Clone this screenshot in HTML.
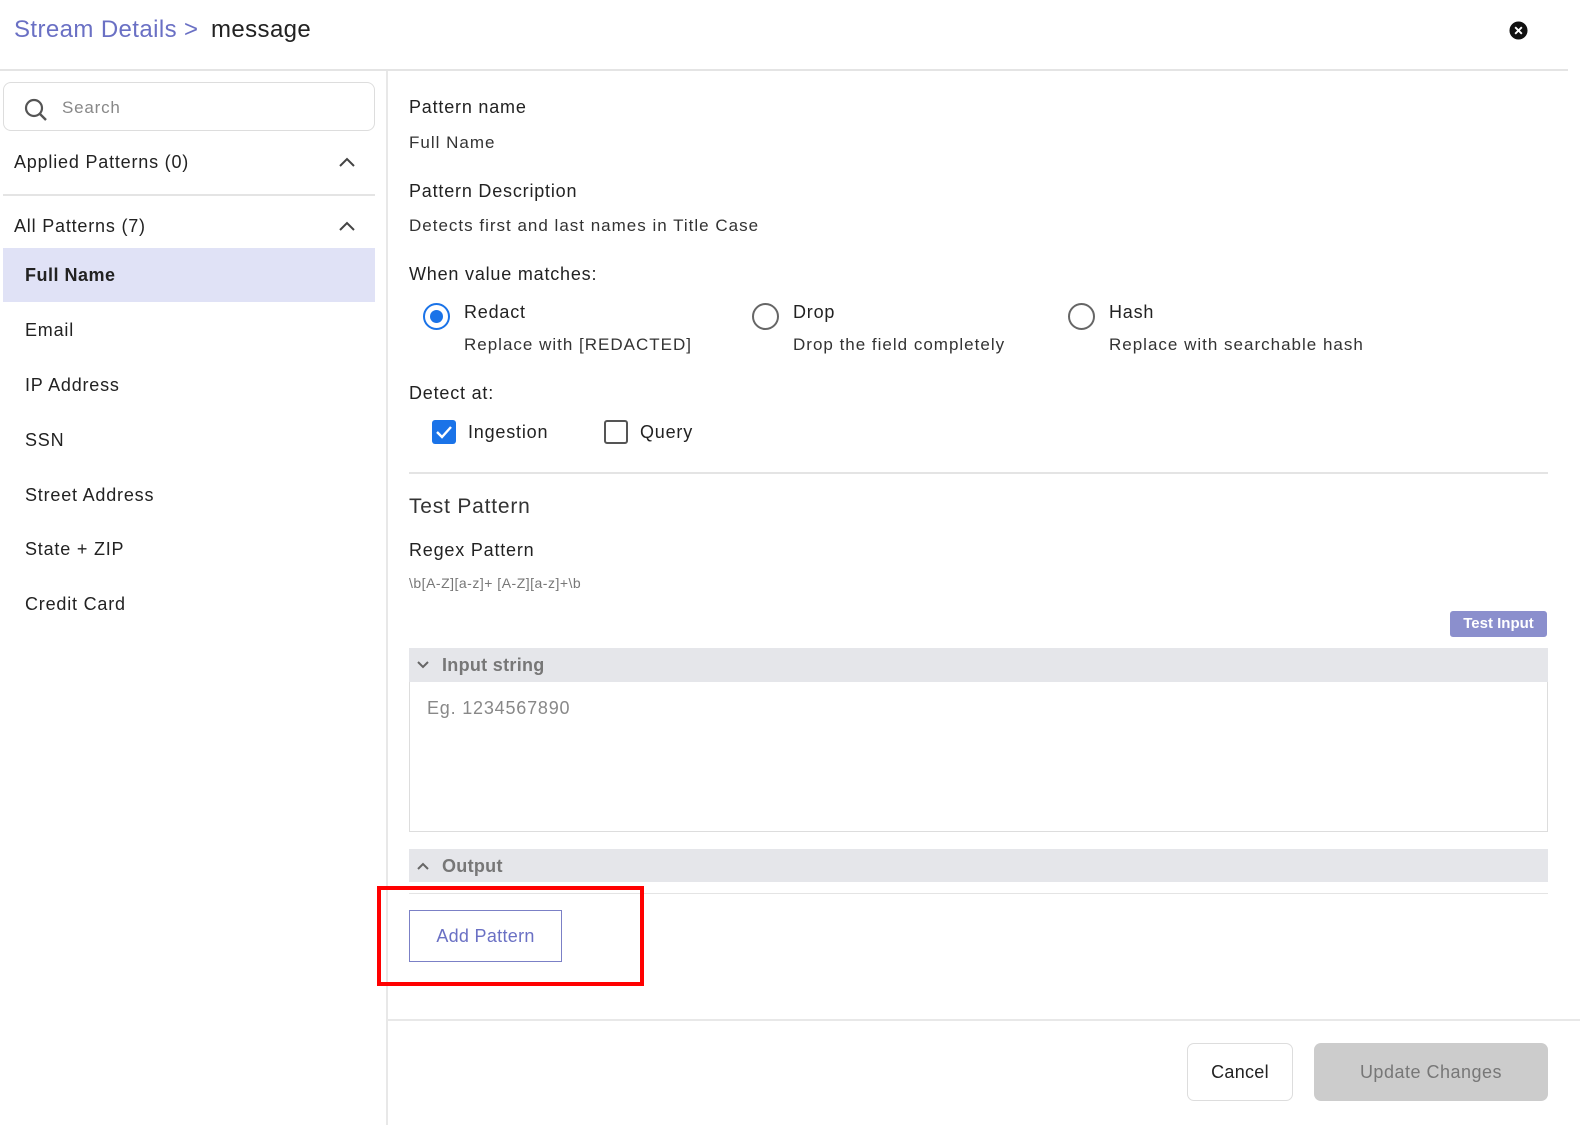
<!DOCTYPE html>
<html><head><meta charset="utf-8"><style>
*{box-sizing:border-box;margin:0;padding:0}
body{width:1580px;height:1125px;background:#fff;font-family:"Liberation Sans",sans-serif;color:#222;position:relative;overflow:hidden;letter-spacing:0.8px}
.a{position:absolute;white-space:nowrap}
.t{font-size:18px;line-height:22px}
.s{font-size:17px;line-height:22px;color:#333;letter-spacing:1px}
</style></head><body>
<div class="a" style="left:14px;top:15px;font-size:24px;line-height:30px;color:#6a70c4;letter-spacing:0.4px">Stream Details &gt;</div>
<div class="a" style="left:211px;top:15px;font-size:24px;line-height:30px;color:#222;letter-spacing:0.4px">message</div>
<svg class="a" style="left:1509px;top:21px" width="19" height="19" viewBox="0 0 20 20"><circle cx="10" cy="10" r="9.5" fill="#111"/><path d="M6.5 6.5l7 7M13.5 6.5l-7 7" stroke="#fff" stroke-width="2"/></svg>
<div class="a" style="left:0;top:69px;width:1568px;height:2px;background:#e4e4e4"></div>
<div class="a" style="left:386px;top:71px;width:2px;height:1054px;background:#e8e8e8"></div>

<div class="a" style="left:3px;top:82px;width:372px;height:49px;border:1px solid #ddd;border-radius:8px"></div>
<svg class="a" style="left:23px;top:97px" width="26" height="26" viewBox="0 0 26 26"><circle cx="11" cy="11" r="8" fill="none" stroke="#555" stroke-width="2.2"/><path d="M17 17l6 6" stroke="#555" stroke-width="2.4"/></svg>
<div class="a t" style="left:62px;top:97px;color:#888;font-size:17px">Search</div>
<div class="a t" style="left:14px;top:151px">Applied Patterns (0)</div>
<svg class="a" style="left:338px;top:155px" width="18" height="14"><path d="M2 11l7-7 7 7" fill="none" stroke="#444" stroke-width="2"/></svg>
<div class="a" style="left:3px;top:194px;width:372px;height:2px;background:#e4e4e4"></div>
<div class="a t" style="left:14px;top:215px">All Patterns (7)</div>
<svg class="a" style="left:338px;top:219px" width="18" height="14"><path d="M2 11l7-7 7 7" fill="none" stroke="#444" stroke-width="2"/></svg>
<div class="a" style="left:3px;top:248px;width:372px;height:54px;background:#e0e2f6"></div>
<div class="a t" style="left:25px;top:264px;font-weight:bold;letter-spacing:0.5px">Full Name</div>
<div class="a t" style="left:25px;top:319px">Email</div>
<div class="a t" style="left:25px;top:374px">IP Address</div>
<div class="a t" style="left:25px;top:429px">SSN</div>
<div class="a t" style="left:25px;top:484px">Street Address</div>
<div class="a t" style="left:25px;top:538px">State + ZIP</div>
<div class="a t" style="left:25px;top:593px">Credit Card</div>

<div class="a t" style="left:409px;top:96px">Pattern name</div>
<div class="a s" style="left:409px;top:132px">Full Name</div>
<div class="a t" style="left:409px;top:180px">Pattern Description</div>
<div class="a s" style="left:409px;top:215px">Detects first and last names in Title Case</div>
<div class="a t" style="left:409px;top:263px">When value matches:</div>

<div class="a" style="left:423px;top:303px;width:27px;height:27px;border:2.5px solid #1a73e8;border-radius:50%"></div>
<div class="a" style="left:430px;top:310px;width:13px;height:13px;background:#1a73e8;border-radius:50%"></div>
<div class="a t" style="left:464px;top:301px">Redact</div>
<div class="a s" style="left:464px;top:334px">Replace with [REDACTED]</div>
<div class="a" style="left:752px;top:303px;width:27px;height:27px;border:2px solid #666;border-radius:50%"></div>
<div class="a t" style="left:793px;top:301px">Drop</div>
<div class="a s" style="left:793px;top:334px">Drop the field completely</div>
<div class="a" style="left:1068px;top:303px;width:27px;height:27px;border:2px solid #666;border-radius:50%"></div>
<div class="a t" style="left:1109px;top:301px">Hash</div>
<div class="a s" style="left:1109px;top:334px">Replace with searchable hash</div>

<div class="a t" style="left:409px;top:382px">Detect at:</div>
<div class="a" style="left:432px;top:420px;width:24px;height:24px;background:#1a73e8;border-radius:3px"></div>
<svg class="a" style="left:432px;top:420px" width="24" height="24"><path d="M5 12l5 5 9-10" fill="none" stroke="#fff" stroke-width="2.4"/></svg>
<div class="a t" style="left:468px;top:421px">Ingestion</div>
<div class="a" style="left:604px;top:420px;width:24px;height:24px;border:2px solid #555;border-radius:3px"></div>
<div class="a t" style="left:640px;top:421px">Query</div>

<div class="a" style="left:409px;top:472px;width:1139px;height:2px;background:#e4e4e4"></div>
<div class="a" style="left:409px;top:494px;font-size:21px;line-height:26px;color:#333">Test Pattern</div>
<div class="a t" style="left:409px;top:539px">Regex Pattern</div>
<div class="a" style="left:409px;top:574px;font-size:14px;line-height:18px;color:#777;letter-spacing:0.5px">\b[A-Z][a-z]+ [A-Z][a-z]+\b</div>
<div class="a" style="left:1450px;top:611px;width:97px;height:26px;background:#8b8fcd;border-radius:3px;color:#fff;font-size:15px;font-weight:bold;line-height:26px;text-align:center;letter-spacing:0">Test Input</div>

<div class="a" style="left:409px;top:648px;width:1139px;height:34px;background:#e5e6ea"></div>
<svg class="a" style="left:416px;top:659px" width="14" height="12"><path d="M2 3l5 5 5-5" fill="none" stroke="#666" stroke-width="2"/></svg>
<div class="a" style="left:442px;top:654px;font-size:18px;font-weight:bold;color:#777;line-height:22px;letter-spacing:0.3px">Input string</div>
<div class="a" style="left:409px;top:682px;width:1139px;height:150px;border:1px solid #ddd;border-top:none"></div>
<div class="a" style="left:427px;top:697px;font-size:18px;color:#888;line-height:22px">Eg. 1234567890</div>
<div class="a" style="left:409px;top:849px;width:1139px;height:33px;background:#e5e6ea"></div>
<svg class="a" style="left:416px;top:860px" width="14" height="12"><path d="M2 9l5-5 5 5" fill="none" stroke="#666" stroke-width="2"/></svg>
<div class="a" style="left:442px;top:855px;font-size:18px;font-weight:bold;color:#777;line-height:22px;letter-spacing:0.3px">Output</div>
<div class="a" style="left:409px;top:893px;width:1139px;height:1px;background:#e4e4e4"></div>

<div class="a" style="left:409px;top:910px;width:153px;height:52px;border:1.5px solid #7b80c6;color:#6a70c4;font-size:18px;line-height:50px;text-align:center;letter-spacing:0.3px">Add Pattern</div>
<div class="a" style="left:377px;top:886px;width:267px;height:100px;border:4px solid #f00"></div>

<div class="a" style="left:388px;top:1019px;width:1192px;height:2px;background:#e8e8e8"></div>
<div class="a" style="left:1187px;top:1043px;width:106px;height:58px;border:1px solid #ddd;border-radius:7px;font-size:18px;line-height:56px;text-align:center;color:#222;letter-spacing:0.3px">Cancel</div>
<div class="a" style="left:1314px;top:1043px;width:234px;height:58px;background:#cccccc;border-radius:7px;font-size:18px;line-height:58px;text-align:center;color:#777;letter-spacing:0.5px">Update Changes</div>
</body></html>
